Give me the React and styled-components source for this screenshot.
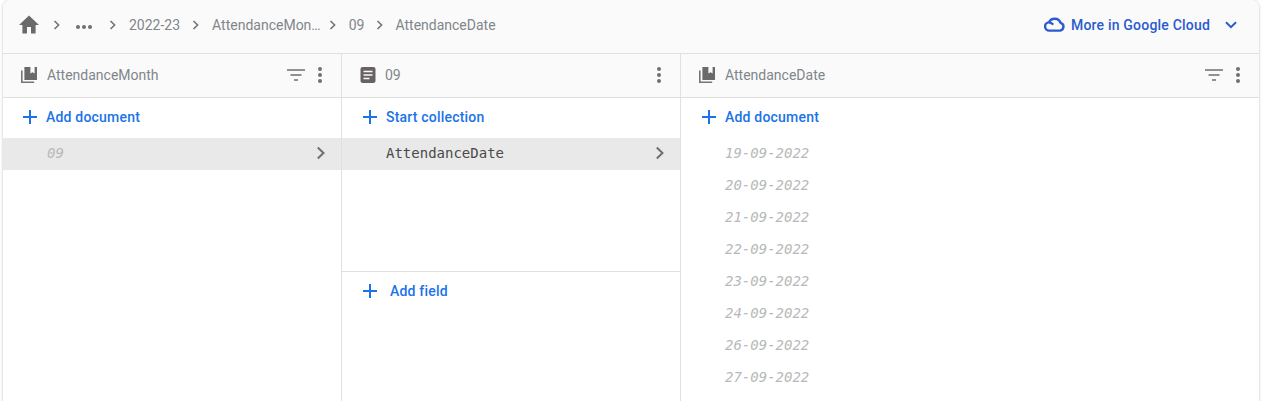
import React from "react";
import styled, { createGlobalStyle } from "styled-components";

const Global = createGlobalStyle`
  html, body { margin: 0; padding: 0; background: #fff; overflow: hidden; height: 401px; }
  body { font-family: Roboto, "Liberation Sans", sans-serif; }
  * { box-sizing: border-box; }
`;

const Page = styled.div`
  width: 1270px;
  height: 401px;
  padding-left: 3px;
  overflow: hidden;
`;

const Card = styled.div`
  width: 1256px;
  height: 420px;
  background: #fff;
  border-radius: 8px;
  box-shadow: 0 0 2px 1px rgba(60, 64, 67, 0.16);
  overflow: hidden;
  display: flex;
  flex-direction: column;
`;

const TopBar = styled.header`
  height: 54px;
  flex: none;
  background: #fafafa;
  border-bottom: 1px solid #e0e0e0;
  display: flex;
  align-items: center;
  justify-content: space-between;
  padding: 0 22px 4px 15px;
`;

const Crumbs = styled.nav`
  display: flex;
  align-items: center;
  color: #80868b;
  font-size: 14px;
`;

const Crumb = styled.span`
  white-space: nowrap;
`;

const Sep = styled.svg`
  width: 8px;
  height: 10px;
  margin: ${p => p.$m || "0 12px 0 12px"};
  flex: none;
`;

const Dots = styled.svg`
  width: 18px;
  height: 6px;
  margin-top: 5px;
  flex: none;
`;

const HomeIcon = styled.svg`
  width: 22px;
  height: 22px;
  flex: none;
  margin-right: 13px;
`;

const Cloud = styled.button`
  display: flex;
  align-items: center;
  gap: 6px;
  border: 0;
  background: none;
  padding: 0;
  font: 500 14px Roboto, sans-serif;
  letter-spacing: 0.2px;
  color: #2a5bd0;
`;

const Columns = styled.div`
  flex: 1;
  display: flex;
  min-height: 0;
`;

const Column = styled.section`
  width: ${p => p.$w};
  flex: ${p => (p.$grow ? "1" : "none")};
  border-right: ${p => (p.$last ? "0" : "1px solid #e0e0e0")};
  display: flex;
  flex-direction: column;
`;

const ColHead = styled.div`
  height: 44px;
  flex: none;
  background: #fafafa;
  border-bottom: 1px solid #e0e0e0;
  display: flex;
  align-items: center;
  padding: 0 ${p => p.$pr || "19px"} 2px ${p => p.$pl || "17px"};
  font-size: 14px;
  color: #80868b;
`;

const ColTitle = styled.span`
  flex: 1;
  margin-left: 9px;
`;

const HeadIcon = styled.svg`
  flex: none;
  display: block;
`;

const ActionRow = styled.div`
  height: ${p => p.$h || "40px"};
  flex: none;
  display: flex;
  align-items: center;
  padding: 0 0 2px ${p => p.$pl || "19px"};
  gap: ${p => p.$gap || "8px"};
  color: #1a73e8;
  font-size: 14px;
  font-weight: 500;
  letter-spacing: 0.2px;
`;

const ListRow = styled.div`
  height: 32px;
  flex: none;
  display: flex;
  align-items: center;
  justify-content: space-between;
  padding: 0 ${p => p.$pr || "15px"} 2px ${p => p.$pl || "44px"};
  background: ${p => (p.$selected ? "#e9e9e9" : "transparent")};
  font-family: "DejaVu Sans Mono", monospace;
  font-size: 14px;
  font-style: ${p => (p.$ghost ? "italic" : "normal")};
  color: ${p => (p.$ghost ? "#b8b8b8" : "#4a4a4a")};
`;

const Spacer = styled.div`
  height: ${p => p.$h};
  flex: none;
  border-bottom: ${p => (p.$line ? "1px solid #e0e0e0" : "0")};
`;

const SepIcon = ({ m }) => (
  <Sep $m={m} viewBox="0 0 8 10"><path d="M1.5 1 5.6 5 1.5 9" fill="none" stroke="#7a7068" strokeWidth="1.6" /></Sep>
);

const Plus = () => (
  <svg width="16" height="16" viewBox="0 0 16 16"><path d="M8 1v14M1 8h14" stroke="#1a73e8" strokeWidth="2" /></svg>
);

const Chevron = () => (
  <svg width="10" height="14" viewBox="0 0 10 14"><path d="M1.8 1.5 7.5 7l-5.7 5.5" fill="none" stroke="#6f6f6f" strokeWidth="2" /></svg>
);

const CollectionIcon = () => (
  <HeadIcon width="18" height="18" viewBox="0 0 18 18">
    <path d="M1 4.5h1.6V15.4h11.6V17H1z" fill="#757575" />
    <path d="M4.4 1h12.6v13H4.4z" fill="#6a6a6a" />
    <path d="M10.4 1h4.2v6.6l-2.1-1.4-2.1 1.4z" fill="#fafafa" />
  </HeadIcon>
);

const DocIcon = () => (
  <HeadIcon width="16" height="16" viewBox="0 0 16 16">
    <rect width="15" height="16" x="0.5" rx="2.2" fill="#6a6262" />
    <path d="M3.5 4.5h9M3.5 8h9M3.5 11.5h6" stroke="#fafafa" strokeWidth="1.5" />
  </HeadIcon>
);

const FilterIcon = () => (
  <HeadIcon width="18" height="12" viewBox="0 0 18 12">
    <path d="M0 1h18M3.5 6h11M7 11h4" stroke="#6f6f6f" strokeWidth="1.7" />
  </HeadIcon>
);

const MoreIcon = ({ ml }) => (
  <HeadIcon width="4" height="16" viewBox="0 0 4 16" style={{ marginLeft: ml }}>
    <circle cx="2" cy="2" r="2" fill="#707070" /><circle cx="2" cy="8" r="2" fill="#707070" /><circle cx="2" cy="14" r="2" fill="#707070" />
  </HeadIcon>
);

const dates = ["19-09-2022", "20-09-2022", "21-09-2022", "22-09-2022", "23-09-2022", "24-09-2022", "26-09-2022", "27-09-2022"];

export default function App() {
  return (
    <Page>
      <Global />
      <Card>
        <TopBar>
          <Crumbs>
            <HomeIcon viewBox="0 0 22 22"><path d="M9 19.5v-6.6h4v6.6h4.6v-8.4H21L11 1.5 1 11.1h3.4v8.4z" fill="#6a6a6a" /></HomeIcon>
            <SepIcon m="0 14px 0 0" />
            <Dots viewBox="0 0 18 6"><circle cx="3" cy="3" r="2" fill="#6f6f6f" /><circle cx="9" cy="3" r="2" fill="#6f6f6f" /><circle cx="15" cy="3" r="2" fill="#6f6f6f" /></Dots>
            <SepIcon m="0 12px 0 16px" />
            <Crumb>2022-23</Crumb>
            <SepIcon />
            <Crumb>AttendanceMon…</Crumb>
            <SepIcon m="0 12px 0 8px" />
            <Crumb>09</Crumb>
            <SepIcon m="0 11px 0 12px" />
            <Crumb>AttendanceDate</Crumb>
          </Crumbs>
          <Cloud>
            <svg width="21" height="15" viewBox="0 0 21 15"><path d="M5.5 13.6a4.1 4.1 0 0 1-.6-8.2A6.4 6.4 0 0 1 16.6 5.8 4 4 0 0 1 16 13.6zM5.4 5.6c1.6.1 2.9.8 3.8 2" fill="none" stroke="#2a5bd0" strokeWidth="2.4" /></svg>
            <span>More in Google Cloud</span>
            <svg width="12" height="8" viewBox="0 0 12 8" style={{ marginLeft: 9 }}><path d="M1 1.2 6 6.2l5-5" fill="none" stroke="#2a5bd0" strokeWidth="2" /></svg>
          </Cloud>
        </TopBar>
        <Columns>
          <Column $w="339px">
            <ColHead>
              <CollectionIcon />
              <ColTitle>AttendanceMonth</ColTitle>
              <FilterIcon />
              <MoreIcon ml="13px" />
            </ColHead>
            <ActionRow><Plus /><span>Add document</span></ActionRow>
            <ListRow $selected $ghost><span>09</span><Chevron /></ListRow>
          </Column>
          <Column $w="339px">
            <ColHead $pl="18px" $pr="19px">
              <DocIcon />
              <ColTitle>09</ColTitle>
              <MoreIcon />
            </ColHead>
            <ActionRow $pl="20px"><Plus /><span>Start collection</span></ActionRow>
            <ListRow $selected><span>AttendanceDate</span><Chevron /></ListRow>
            <Spacer $h="102px" $line />
            <ActionRow $pl="20px" $gap="12px"><Plus /><span>Add field</span></ActionRow>
          </Column>
          <Column $grow $last>
            <ColHead $pl="17px" $pr="19px">
              <CollectionIcon />
              <ColTitle>AttendanceDate</ColTitle>
              <FilterIcon />
              <MoreIcon ml="13px" />
            </ColHead>
            <ActionRow $pl="20px"><Plus /><span>Add document</span></ActionRow>
            {dates.map(d => <ListRow key={d} $ghost>{d}</ListRow>)}
          </Column>
        </Columns>
      </Card>
    </Page>
  );
}
